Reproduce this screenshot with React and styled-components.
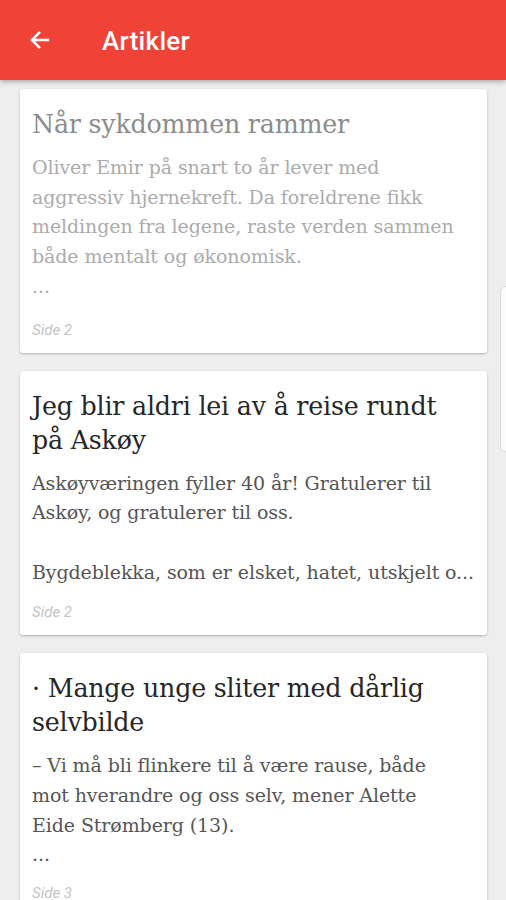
import React from "react";
import styled, { createGlobalStyle } from "styled-components";

const Global = createGlobalStyle`
  html, body { margin: 0; padding: 0; }
  body {
    background: #eeeeee;
    width: 506px;
    height: 900px;
    overflow: hidden;
    font-family: Roboto, "Liberation Sans", sans-serif;
  }
`;

const Screen = styled.div`
  position: relative;
  width: 506px;
  height: 900px;
  overflow: hidden;
  background: #eeeeee;
`;

const AppBar = styled.header`
  position: relative;
  z-index: 2;
  height: 80px;
  background: #f04236;
  display: flex;
  align-items: center;
  box-shadow: 0 2px 5px rgba(0, 0, 0, 0.28);
`;

const BackButton = styled.button`
  width: 80px;
  height: 80px;
  border: 0;
  background: transparent;
  padding: 0;
  display: flex;
  align-items: center;
  justify-content: center;
  color: #fff;
  margin-right: 22px;
`;

const Title = styled.h1`
  margin: 0;
  color: #fff;
  font-family: Roboto, "Liberation Sans", sans-serif;
  font-weight: 500;
  font-size: 26px;
  letter-spacing: 0.3px;
  line-height: 1;
  padding-top: 2px;
`;

const List = styled.main`
  display: flex;
  flex-direction: column;
  gap: 18px;
  padding: 9px 19px 0 20px;
`;

const Card = styled.article`
  background: #fff;
  border-radius: 3px;
  box-shadow: 0 1px 3px rgba(0, 0, 0, 0.2), 0 1px 1px rgba(0, 0, 0, 0.06);
  padding: 19px 12px 13px 12px;
  display: flex;
  flex-direction: column;
`;

const Headline = styled.h2`
  margin: 0 0 11px 0;
  font-family: "DejaVu Serif", "Liberation Serif", serif;
  font-weight: 400;
  font-size: 25.3px;
  line-height: 34px;
  letter-spacing: -0.2px;
  color: ${(p) => (p.$read ? "#8c8c8c" : "#262626")};
`;

const Body = styled.div`
  font-family: "DejaVu Serif", "Liberation Serif", serif;
  font-size: 19px;
  line-height: 29.7px;
  color: ${(p) => (p.$read ? "#ababab" : "#555555")};
  letter-spacing: -0.1px;
`;

const Line = styled.div`
  white-space: nowrap;
  min-height: 29.7px;
`;

const Page = styled.div`
  margin-top: ${(p) => p.$gap}px;
  font-family: Roboto, "Liberation Sans", sans-serif;
  font-style: italic;
  font-size: 15px;
  line-height: 20px;
  color: #c4c4c4;
`;

const ScrollThumb = styled.div`
  position: absolute;
  left: 500px;
  top: 286px;
  width: 14px;
  height: 166px;
  border: 1px solid #dcdcdc;
  border-radius: 6px;
  background: #fbfbfb;
  box-sizing: border-box;
`;

const BackArrow = () => (
  <svg width="26" height="26" viewBox="0 0 24 24" fill="none" stroke="#fff" strokeWidth="2.4">
    <path d="M20.5 12H5" />
    <path d="M12 4.5L4.5 12L12 19.5" />
  </svg>
);

const articles = [
  {
    read: true,
    title: ["Når sykdommen rammer"],
    body: [
      "Oliver Emir på snart to år lever med",
      "aggressiv hjernekreft. Da foreldrene fikk",
      "meldingen fra legene, raste verden sammen",
      "både mentalt og økonomisk.",
      "...",
    ],
    page: "Side 2",
    gap: 18,
  },
  {
    title: ["Jeg blir aldri lei av å reise rundt", "på Askøy"],
    body: [
      "Askøyværingen fyller 40 år! Gratulerer til",
      "Askøy, og gratulerer til oss.",
      "",
      "Bygdeblekka, som er elsket, hatet, utskjelt o...",
    ],
    page: "Side 2",
    gap: 15,
  },
  {
    title: ["· Mange unge sliter med dårlig", "selvbilde"],
    body: [
      "– Vi må bli flinkere til å være rause, både",
      "mot hverandre og oss selv, mener Alette",
      "Eide Strømberg (13).",
      "...",
    ],
    page: "Side 3",
    gap: 13,
  },
];

export default function App() {
  return (
    <Screen>
      <Global />
      <AppBar>
        <BackButton aria-label="Tilbake">
          <BackArrow />
        </BackButton>
        <Title>Artikler</Title>
      </AppBar>
      <List>
        {articles.map((a, i) => (
          <Card key={i}>
            <Headline $read={a.read}>
              {a.title.map((t, j) => (
                <div key={j}>{t}</div>
              ))}
            </Headline>
            <Body $read={a.read}>
              {a.body.map((l, j) => (
                <Line key={j}>{l}</Line>
              ))}
            </Body>
            <Page $gap={a.gap}>{a.page}</Page>
          </Card>
        ))}
      </List>
      <ScrollThumb />
    </Screen>
  );
}
